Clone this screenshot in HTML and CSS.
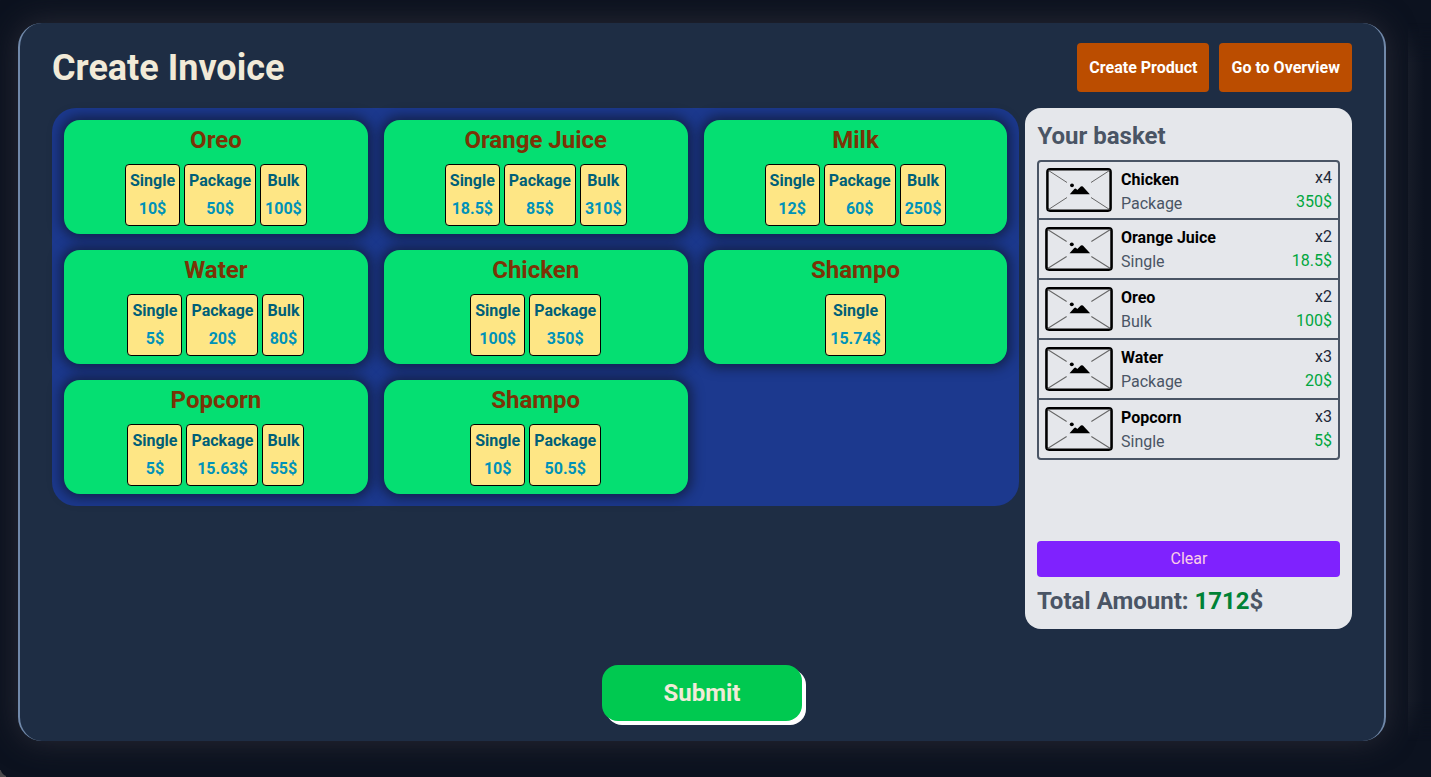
FILE: index.html
```
<!DOCTYPE html>
<html lang="en">
<head>
<meta charset="utf-8">
<title>Create Invoice</title>
<link rel="stylesheet" href="styles.css">
</head>
<body>
<svg class="defs" width="0" height="0">
  <symbol id="thumb" viewBox="0 0 66 44" preserveAspectRatio="none">
    <rect x="1.4" y="1.3" width="63.2" height="41.4" rx="2.6" fill="none" stroke="#000" stroke-width="2.5"/>
    <path d="M2.5 2.5 21 14.5M63.500 2.500 45 14.500M2.500 41.500 21 29.500M63.500 41.500 45 29.500" stroke="#666" stroke-width="1" fill="none"/>
    <circle cx="26" cy="17.300" r="1.900"/>
    <path d="M23.800 26.200 28.300 21Q29.300 20 30.300 21L31.300 22 34.800 18.600Q35.800 17.800 36.800 18.600L43.800 26.200Z"/>
  </symbol>
</svg>
<main class="panel">
  <header class="header">
    <h1>Create Invoice</h1>
    <nav class="nav"><a class="nav-btn">Create Product</a><a class="nav-btn">Go to Overview</a></nav>
  </header>
  <div class="content">
    <section class="products">
      <article class="card"><h2>Oreo</h2><div class="options"><div class="option">Single<span>10$</span></div><div class="option">Package<span>50$</span></div><div class="option">Bulk<span>100$</span></div></div></article>
      <article class="card"><h2>Orange Juice</h2><div class="options"><div class="option">Single<span>18.5$</span></div><div class="option">Package<span>85$</span></div><div class="option">Bulk<span>310$</span></div></div></article>
      <article class="card"><h2>Milk</h2><div class="options"><div class="option">Single<span>12$</span></div><div class="option">Package<span>60$</span></div><div class="option">Bulk<span>250$</span></div></div></article>
      <article class="card"><h2>Water</h2><div class="options"><div class="option">Single<span>5$</span></div><div class="option">Package<span>20$</span></div><div class="option">Bulk<span>80$</span></div></div></article>
      <article class="card"><h2>Chicken</h2><div class="options"><div class="option">Single<span>100$</span></div><div class="option">Package<span>350$</span></div></div></article>
      <article class="card"><h2>Shampo</h2><div class="options"><div class="option">Single<span>15.74$</span></div></div></article>
      <article class="card"><h2>Popcorn</h2><div class="options"><div class="option">Single<span>5$</span></div><div class="option">Package<span>15.63$</span></div><div class="option">Bulk<span>55$</span></div></div></article>
      <article class="card"><h2>Shampo</h2><div class="options"><div class="option">Single<span>10$</span></div><div class="option">Package<span>50.5$</span></div></div></article>
    </section>
    <aside class="basket">
      <h2>Your basket</h2>
      <ul class="items">
        <li class="item"><svg class="thumb"><use href="#thumb"/></svg><div class="name"><b>Chicken</b><span>Package</span></div><div class="amount">x4<span>350$</span></div></li>
        <li class="item"><svg class="thumb"><use href="#thumb"/></svg><div class="name"><b>Orange Juice</b><span>Single</span></div><div class="amount">x2<span>18.5$</span></div></li>
        <li class="item"><svg class="thumb"><use href="#thumb"/></svg><div class="name"><b>Oreo</b><span>Bulk</span></div><div class="amount">x2<span>100$</span></div></li>
        <li class="item"><svg class="thumb"><use href="#thumb"/></svg><div class="name"><b>Water</b><span>Package</span></div><div class="amount">x3<span>20$</span></div></li>
        <li class="item"><svg class="thumb"><use href="#thumb"/></svg><div class="name"><b>Popcorn</b><span>Single</span></div><div class="amount">x3<span>5$</span></div></li>
      </ul>
      <button class="clear">Clear</button>
      <p class="total">Total Amount: <span>1712</span>$</p>
    </aside>
  </div>
  <button class="submit">Submit</button>
</main>
<div class="edge-glow"></div>
<div class="corner"></div>
</body>
</html>
```
FILE: styles.css
```
* { box-sizing: border-box; margin: 0; padding: 0; }
body {
  height: 777px;
  padding: 23px 45px 36px 18px;
  overflow: hidden;
  background: #0c121f;
  font: 16px/24px Roboto, sans-serif;
}
button { border: 0; font-family: inherit; }
.defs { position: absolute; }
.panel {
  height: 718px;
  padding: 20px 32px;
  display: flex;
  flex-direction: column;
  border: solid #7189aa;
  border-width: 0 2px;
  border-radius: 24px;
  background: #1e2d44;
  box-shadow: 0 0 30px 0 #2a2b36;
}
.header { display: flex; justify-content: space-between; height: 49px; }
h1 { padding-top: 1px; font-size: 36px; line-height: 49px; font-weight: 700; color: #f1ead8; }
.nav { display: flex; gap: 10px; }
.nav-btn { padding: 0 12px; border-radius: 4px; background: #bb4d00; color: #fff; font-weight: 700; line-height: 49px; }
.content { display: flex; gap: 5.6px; align-items: flex-start; margin-top: 16px; }
.products {
  width: 967.4px;
  padding: 12px;
  display: grid;
  grid-template-columns: repeat(3, 1fr);
  gap: 16px;
  border-radius: 24px;
  background: #1c398e;
}
.card { height: 114px; border-radius: 16px; background: #05df72; box-shadow: 0 0 12px 4px rgba(13, 19, 31, .6); }
.card h2 { padding-top: 4px; font-size: 24px; line-height: 32px; text-align: center; color: #7b3306; }
.options { display: flex; justify-content: center; gap: 4px; margin-top: 8px; }
.option {
  height: 62px;
  padding: 2px 4px;
  display: flex;
  flex-direction: column;
  align-items: center;
  border: 1px solid #000;
  border-radius: 4px;
  background: #fee685;
  color: #005f78;
  font-weight: 700;
  line-height: 28px;
}
.option span { color: #0092b8; }
.basket {
  width: 327px;
  height: 521px;
  padding: 12px;
  display: flex;
  flex-direction: column;
  border-radius: 16px;
  background: #e5e7eb;
}
.basket h2 { font-size: 24px; line-height: 32px; padding-left: .4px; color: #4a5565; }
.items { list-style: none; margin-top: 8px; border: 2px solid #4a5565; border-radius: 4px; }
.item { height: 60px; padding: 6px 6px 0; display: flex; border-bottom: 2px solid #4a5565; }
.item:first-child { height: 58px; }
.item:last-child { height: 58px; border-bottom: 0; }
.thumb { width: 68px; height: 44px; margin-top: 1px; }
.item:first-child .thumb { width: 66px; margin: 0 1px; }
.name { flex: 1; margin-left: 8px; }
.name b, .name span { display: block; }
.name span { color: #4a5565; }
.amount { text-align: right; color: #1e2939; margin-top: -1px; }
.item:first-child .amount { margin-top: -2px; }
.amount span { display: block; color: #00a63e; }
.clear { margin-top: auto; height: 36px; padding: 0 0 2px 1px; border-radius: 4px; background: #7f22fe; color: #fccee8; font-size: 16px; }
.total { margin-top: 8px; font-size: 24px; line-height: 32px; font-weight: 700; color: #4a5565; }
.total span { color: #008236; }
.submit {
  width: 200px;
  height: 56px;
  margin: 36px 0 0 550px;
  border-radius: 16px;
  background: #00c950;
  box-shadow: 4px 4px 0 #fff;
  color: #f1ead8;
  font-size: 24px;
  font-weight: 700;
}
.edge-glow {
  position: absolute;
  top: 23px;
  left: 1408px;
  width: 23px;
  height: 718px;
  background: linear-gradient(90deg, #171c28, #0c121f 70%);
  -webkit-mask-image: linear-gradient(transparent, #000 40px, #000 678px, transparent);
}
.corner { position: absolute; left: 0; top: 770px; width: 6px; height: 7px; background: radial-gradient(circle at 9px -2px, transparent 8px, #4a4a4c 9px); }
```
